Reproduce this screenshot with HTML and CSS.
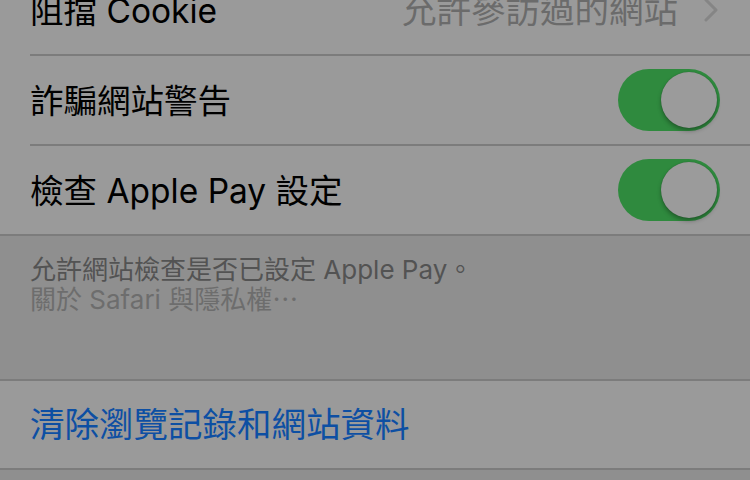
FILE: index.html
```html
<!DOCTYPE html>
<html lang="zh-Hant">
<head>
  <meta charset="UTF-8">
  <meta name="viewport" content="width=device-width, initial-scale=1.0">
  <title>Safari</title>
  <link rel="stylesheet" href="styles.css">
</head>
<body>
  <div class="screen">
    <!-- Privacy group -->
    <ul class="group first-group">
      <li class="cell">
        <div class="cell-inner">
          <span class="label">阻擋 Cookie</span>
          <span class="value">允許參訪過的網站</span>
          <svg class="chevron" width="14" height="24" viewBox="0 0 14 24">
            <path d="M2 2 L12 12 L2 22" fill="none" stroke="#858585" stroke-width="3" stroke-linecap="round" stroke-linejoin="round"/>
          </svg>
        </div>
      </li>
      <li class="cell">
        <div class="cell-inner">
          <span class="label">詐騙網站警告</span>
          <span class="switch on"><span class="knob"></span></span>
        </div>
      </li>
      <li class="cell">
        <div class="cell-inner last">
          <span class="label">檢查 Apple Pay 設定</span>
          <span class="switch on"><span class="knob"></span></span>
        </div>
      </li>
    </ul>

    <div class="group-footer">
      <p>允許網站檢查是否已設定 Apple Pay。</p>
      <p class="link">關於 Safari 與隱私權⋯</p>
    </div>

    <!-- Clear data -->
    <ul class="group action-group">
      <li class="cell">
        <div class="cell-inner last">
          <span class="action">清除瀏覽記錄和網站資料</span>
        </div>
      </li>
    </ul>
  </div>
</body>
</html>
```

FILE: styles.css
```css
/* General Styles */
body {
  font-family: Inter, "Noto Sans CJK TC", sans-serif;
  margin: 0;
  padding: 0;
  background-color: #8f8f8f;
  color: #000;
  overflow: hidden;
}

.screen {
  width: 750px;
  height: 480px;
  overflow: hidden;
}

ul {
  list-style: none;
  margin: 0;
  padding: 0;
}

/* Table groups */
.group {
  background-color: #9a9a9a;
  border-top: 2px solid #7c7c7c;
  border-bottom: 2px solid #7c7c7c;
}

.first-group {
  margin-top: -34px;
  border-top: none;
}

.cell {
  padding-left: 30px;
}

.cell-inner {
  display: flex;
  align-items: center;
  height: 88px;
  padding-right: 30px;
  border-bottom: 2px solid #7c7c7c;
}

.cell-inner.last {
  border-bottom: none;
}

.action-group .cell-inner {
  height: 87px;
}

.label {
  flex: 1;
  font-size: 33.5px;
  padding-bottom: 4px;
}

.value {
  font-size: 34.5px;
  color: #6b6b6b;
  margin-right: 26px;
  padding-bottom: 4px;
}

.chevron {
  margin-right: 2px;
}

.action {
  font-size: 34.5px;
  color: #0d4fa3;
  padding-bottom: 6px;
}

/* Switch */
.switch {
  position: relative;
  width: 102px;
  height: 62px;
  border-radius: 31px;
  background-color: #2f8a3e;
}

.switch .knob {
  position: absolute;
  top: 3px;
  right: 3px;
  width: 56px;
  height: 56px;
  border-radius: 50%;
  background-color: #9b9b9b;
  box-shadow: 0 3px 4px rgba(0, 0, 0, 0.3), 0 0 1px rgba(0, 0, 0, 0.3);
}

/* Footer text */
.group-footer {
  height: 143px;
  box-sizing: border-box;
  padding: 19px 30px 0;
  font-size: 26px;
  color: #535353;
}

.group-footer p {
  margin: 0;
  line-height: 30px;
}

.group-footer .link {
  color: #6d6d6d;
}
```
